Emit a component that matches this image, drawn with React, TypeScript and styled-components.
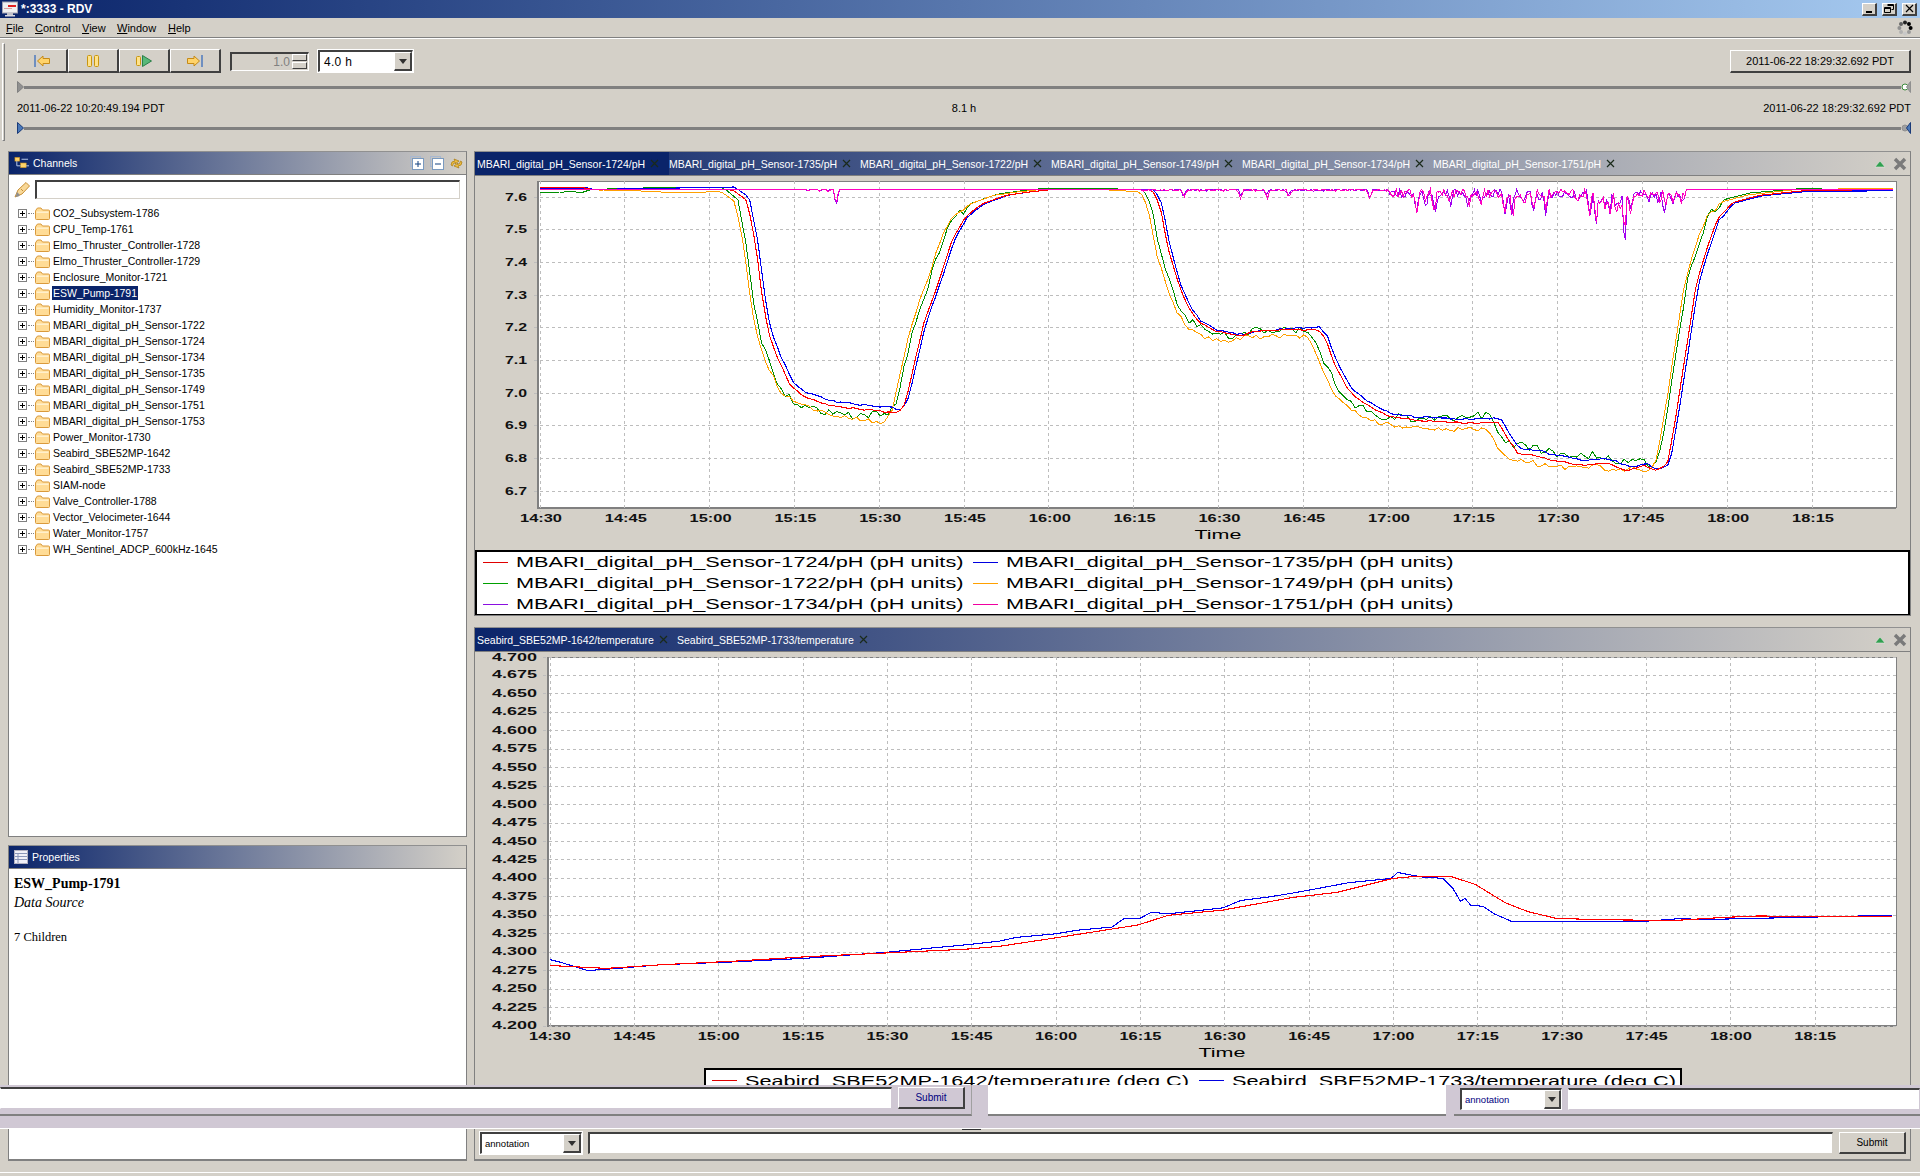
import React from 'react';
import styled, { createGlobalStyle, css } from 'styled-components';

const BEIGE = '#d4d0c8';
const LILAC = '#d0c8d4';
const NAVY = '#0a246a';

type Pt = [number, number];

// chart data, minutes after 14:30 against the value
const phBase: Pt[] = [
    [0, 7.63], [8, 7.628], [9, 7.623], [34, 7.622], [36.6, 7.59], [38.2, 7.45], [39.4, 7.28], [40.5, 7.18], [42, 7.11],
    [44.4, 7.02], [46.8, 6.99], [50.8, 6.965], [54.7, 6.955], [60, 6.945], [63.4, 6.94], [64.6, 6.97], [66.6, 7.12],
    [68, 7.22], [70.5, 7.34], [72.9, 7.47], [75.3, 7.54], [78.4, 7.58], [82.4, 7.605], [86.4, 7.615], [90, 7.622],
    [108.3, 7.622], [109.7, 7.573], [111, 7.45], [113, 7.33], [114.8, 7.26], [116.6, 7.217], [119.4, 7.19], [124, 7.177],
    [126.8, 7.19], [131.5, 7.194], [137.5, 7.195], [138.9, 7.167], [140.7, 7.085], [143, 7.01], [145.3, 6.974], [150, 6.93],
    [154.6, 6.918], [160, 6.912], [165, 6.908], [169.4, 6.912], [171.2, 6.862], [173, 6.816], [175.9, 6.81], [178.7, 6.796],
    [184.2, 6.78], [188.8, 6.786], [192.5, 6.762], [195, 6.78], [197.6, 6.765], [199.4, 6.78], [200.8, 6.913], [202.7, 7.126],
    [204.5, 7.33], [206.4, 7.44], [208.2, 7.53], [211, 7.583], [215.7, 7.605], [224, 7.62], [239.7, 7.623],
];

const phVariants = [
    {
        color: '#008f00', width: 1, shift: -1.6, noise: 0.012, seed: 3,
        offsets: [[0, -0.015], [7, -0.012], [9, 0], [20, 0.006], [33, 0.006], [45, -0.02], [55, -0.022], [62, 0.004], [120, 0.002], [145, -0.005], [160, 0.016], [175, 0.03], [190, 0.024], [198, 0.012], [240, 0]] as Pt[],
    },
    {
        color: '#ffa000', width: 1, shift: -2.1, noise: 0.007, seed: 7,
        offsets: [[0, 0], [15, -0.002], [25, -0.01], [33, -0.004], [45, -0.012], [60, -0.03], [64, 0], [100, 0], [120, -0.02], [150, -0.02], [165, -0.02], [185, -0.008], [200, 0], [240, 0.004]] as Pt[],
    },
    {
        color: '#0000f0', width: 1.1, shift: 0.4, noise: 0.003, seed: 11,
        offsets: [[0, -0.004], [9, 0], [45, 0.012], [62, 0.014], [66, 0], [130, 0.002], [145, 0.008], [170, 0.012], [180, 0.018], [192, 0.012], [199, 0], [240, -0.004]] as Pt[],
    },
    {
        color: '#ff0000', width: 1.1, shift: 0, noise: 0.002, seed: 17,
        offsets: [[0, 0], [240, 0]] as Pt[],
    },
];

const phDips: Pt[] = [
    [47.5, 0.006], [49.5, 0.006], [51, 0.008], [52.4, 0.055], [113.9, 0.02], [124, 0.02], [128.6, 0.025], [132.5, 0.02],
    [146.7, 0.03], [155, 0.05], [156.6, 0.03], [158.3, 0.065], [161, 0.03], [164.3, 0.045], [166.5, 0.03], [170.7, 0.08],
    [172, 0.075], [174, 0.03], [175.7, 0.05], [177, 0.02], [178, 0.05], [183.5, 0.03], [185.6, 0.07], [186.8, 0.11],
    [187.7, 0.05], [188.4, 0.06], [189.3, 0.08], [190.3, 0.06], [191, 0.04], [192, 0.15], [193, 0.07], [196, 0.03],
    [198, 0.03], [199, 0.06], [200.4, 0.04], [202, 0.02],
];

const tempRed: Pt[] = [
    [0, 4.282], [10, 4.278], [20, 4.283], [33, 4.288], [46, 4.294], [60, 4.299], [74, 4.304], [80, 4.308], [90.5, 4.32],
    [104.7, 4.337], [110, 4.35], [119.7, 4.357], [132, 4.374], [140, 4.381], [150, 4.4], [153, 4.402], [160.5, 4.402],
    [164.6, 4.392], [170, 4.367], [174, 4.355], [179, 4.346], [186.6, 4.344], [200, 4.343], [208.5, 4.347], [214.8, 4.349],
    [238.8, 4.348],
];

const tempBlue: Pt[] = [
    [0, 4.29], [2, 4.286], [6.7, 4.275], [12, 4.278], [19.8, 4.283], [33, 4.287], [46, 4.292], [60, 4.3], [74, 4.31],
    [80, 4.315], [83, 4.32], [90, 4.325], [94, 4.33], [100, 4.334], [102, 4.345], [105, 4.346], [107, 4.354], [110, 4.352],
    [119.7, 4.36], [122.9, 4.37], [128, 4.375], [132, 4.38], [135.7, 4.385], [142, 4.394], [149.7, 4.4], [150.8, 4.408],
    [155, 4.402], [158.9, 4.4], [160.7, 4.386], [162, 4.369], [162.8, 4.373], [163.8, 4.364], [166, 4.362], [168, 4.352],
    [171, 4.342], [179, 4.341], [195, 4.342], [201.7, 4.346], [204, 4.344], [215, 4.346], [238.8, 4.35],
];

const lerp = (pts: Pt[], t: number) => {
    if (t <= pts[0][0]) return pts[0][1];
    for (let i = 1; i < pts.length; i++) {
        if (t <= pts[i][0]) {
            const [t0, v0] = pts[i - 1];
            const [t1, v1] = pts[i];
            return v0 + ((v1 - v0) * (t - t0)) / (t1 - t0);
        }
    }
    return pts[pts.length - 1][1];
};

const rnd = (n: number) => {
    const s = Math.sin(n * 127.1 + 3.7) * 43758.5453;
    return s - Math.floor(s) - 0.5;
};

const toLine = (vals: Pt[], toX: (t: number) => number, toY: (v: number) => number) =>
    vals.map(([t, v]) => `${toX(t).toFixed(1)},${toY(v).toFixed(1)}`).join(' ');

const phX = (t: number) => 540 + t * 5.653;
const phY = (v: number) => 196 + (7.6 - v) * 327;
const tempX = (t: number) => 550 + t * 5.62;
const tempY = (v: number) => 1025 - (v - 4.2) * 738;

const phSeries = phVariants.map((s) => {
    const vals: Pt[] = [];
    for (let t = 0; t <= 239.7; t += 0.7) {
        const b = lerp(phBase, t - s.shift);
        const n = b < 7.58 ? rnd(t + s.seed) * s.noise * 2 : 0;
        vals.push([t, b + lerp(s.offsets, t) + n]);
    }
    return { color: s.color, width: s.width, points: toLine(vals, phX, phY) };
});

const dipSeries = (seed: number, skew: number) => {
    const vals: Pt[] = [];
    for (let t = 0; t <= 239.7; t += 0.3) {
        let v = 7.624;
        phDips.forEach(([at, depth]) => {
            const d = Math.abs(t - at - skew * rnd(at + seed));
            if (d < 0.5) v -= depth * (1 - d / 0.5) * (1 + rnd(at * 3 + seed) * 0.5);
        });
        if (t > 106 && t < 203) v -= Math.abs(rnd(t + seed)) * (t > 150 ? 0.05 : 0.012);
        vals.push([t, v]);
    }
    return toLine(vals, phX, phY);
};

const range = (n: number) => Array.from({ length: n }, (_, i) => i);
const hourLabel = (i: number) => {
    const m = 14 * 60 + 30 + i * 15;
    return `${Math.floor(m / 60)}:${String(m % 60).padStart(2, '0')}`;
};

const channels = [
    'CO2_Subsystem-1786', 'CPU_Temp-1761', 'Elmo_Thruster_Controller-1728', 'Elmo_Thruster_Controller-1729',
    'Enclosure_Monitor-1721', 'ESW_Pump-1791', 'Humidity_Monitor-1737', 'MBARI_digital_pH_Sensor-1722',
    'MBARI_digital_pH_Sensor-1724', 'MBARI_digital_pH_Sensor-1734', 'MBARI_digital_pH_Sensor-1735',
    'MBARI_digital_pH_Sensor-1749', 'MBARI_digital_pH_Sensor-1751', 'MBARI_digital_pH_Sensor-1753', 'Power_Monitor-1730',
    'Seabird_SBE52MP-1642', 'Seabird_SBE52MP-1733', 'SIAM-node', 'Valve_Controller-1788', 'Vector_Velocimeter-1644',
    'Water_Monitor-1757', 'WH_Sentinel_ADCP_600kHz-1645',
];

const phLegend = [
    ['#e00000', '1724'], ['#0000e0', '1735'], ['#00a000', '1722'], ['#ffa000', '1749'], ['#8a10e0', '1734'], ['#f000a0', '1751'],
];

const GlobalStyle = createGlobalStyle`
    html, body {
        margin: 0;
        padding: 0;
        width: 1920px;
        height: 1176px;
        overflow: hidden;
        background: ${BEIGE};
        font-family: "Liberation Sans", Arial, sans-serif;
        font-size: 11px;
        color: #000;
    }
`;

const raised = css`
    border-style: solid;
    border-width: 1px 2px 2px 1px;
    border-color: #fff #404040 #404040 #fff;
    background: ${BEIGE};
    box-sizing: border-box;
`;

const sunken = css`
    border-style: solid;
    border-width: 2px 1px 1px 2px;
    border-color: #404040 #fff #fff #404040;
    box-sizing: border-box;
`;

const Page = styled.div`
    width: 1920px;
    height: 1176px;
    display: flex;
    flex-direction: column;
    overflow: hidden;
`;

const TitleBar = styled.div`
    height: 18px;
    flex: none;
    display: flex;
    align-items: center;
    padding: 0 3px 0 2px;
    gap: 3px;
    background: linear-gradient(90deg, ${NAVY} 0%, #a6caf0 100%);
    color: #fff;
    font-weight: bold;
    font-size: 12px;
`;

const TitleText = styled.span`
    flex: 1;
`;

const WinButton = styled.div`
    ${raised}
    width: 15px;
    height: 13px;
    display: flex;
    align-items: center;
    justify-content: center;
    margin-left: 2px;
`;

const MenuBar = styled.div`
    height: 20px;
    flex: none;
    display: flex;
    align-items: center;
    padding: 0 6px;
    box-sizing: border-box;
    border-bottom: 1px solid #808080;
    box-shadow: 0 1px 0 #fff;
`;

const MenuItem = styled.span<{ $w: number }>`
    width: ${(p) => p.$w}px;
`;

const MenuSpinner = styled.svg`
    margin-left: auto;
    margin-right: 1px;
    margin-top: 1px;
`;

const Toolbar = styled.div`
    height: 113px;
    flex: none;
    display: flex;
    box-sizing: border-box;
    padding: 5px 9px 0 2px;
`;

const Grip = styled.div`
    width: 1px;
    height: 96px;
    border: 1px solid;
    border-color: #fff #808080 #808080 #fff;
    margin-right: 12px;
`;

const ToolStack = styled.div`
    flex: 1;
    display: flex;
    flex-direction: column;
`;

const ToolRow = styled.div`
    display: flex;
    align-items: center;
    height: 24px;
    margin-top: 6px;
`;

const NavButton = styled.div`
    ${raised}
    width: 51px;
    height: 24px;
    display: flex;
    align-items: center;
    justify-content: center;
`;

const Spinner = styled.div`
    ${sunken}
    width: 79px;
    height: 19px;
    margin-left: 9px;
    display: flex;
    align-items: center;
    justify-content: flex-end;
    color: #808080;
    font-size: 12px;
    gap: 2px;
    padding-right: 1px;
`;

const SpinArrows = styled.div`
    width: 15px;
    height: 15px;
    display: flex;
    flex-direction: column;
    gap: 1px;
`;

const SpinArrow = styled.div`
    ${raised}
    flex: 1;
    border-width: 1px;
`;

const SpeedCombo = styled.div`
    ${sunken}
    width: 95px;
    height: 22px;
    margin-left: 9px;
    background: #fff;
    display: flex;
    align-items: center;
    padding-left: 4px;
    font-size: 12px;
    letter-spacing: 0.3px;
    box-shadow: 0 0 0 1px #fff;
`;

const ComboText = styled.span`
    flex: 1;
    white-space: nowrap;
`;

const ComboArrow = styled.div<{ $w: number }>`
    ${raised}
    width: ${(p) => p.$w}px;
    align-self: stretch;
    display: flex;
    align-items: center;
    justify-content: center;
    &::after {
        content: '';
        border-style: solid;
        border-width: 5px 4px 0;
        border-color: #303030 transparent transparent;
    }
`;

const TimeButton = styled.div`
    ${raised}
    width: 181px;
    height: 23px;
    margin-left: auto;
    display: flex;
    align-items: center;
    justify-content: center;
`;

const SliderRow = styled.div<{ $top: number }>`
    display: flex;
    align-items: center;
    height: 14px;
    margin-top: ${(p) => p.$top}px;
`;

const SliderBar = styled.div`
    flex: 1;
    height: 3px;
    background: #808080;
`;

const LabelRow = styled.div`
    display: flex;
    justify-content: space-between;
    align-items: center;
    height: 14px;
    margin-top: 7px;
`;

const Main = styled.div`
    height: 934px;
    flex: none;
    display: grid;
    grid-template-columns: 459px 1437px;
    column-gap: 7px;
    padding-left: 8px;
    overflow: hidden;
`;

const Column = styled.div`
    display: flex;
    flex-direction: column;
    min-width: 0;
`;

const Panel = styled.div<{ $h: number; $gap?: number }>`
    height: ${(p) => p.$h}px;
    flex: none;
    box-sizing: border-box;
    border: 1px solid #808080;
    border-top-color: #909090;
    margin-bottom: ${(p) => p.$gap ?? 0}px;
    display: flex;
    flex-direction: column;
`;

const PanelHead = styled.div`
    height: 22px;
    flex: none;
    display: flex;
    align-items: center;
    padding: 0 2px 0 5px;
    gap: 4px;
    color: #fff;
    font-size: 10.5px;
    background: linear-gradient(90deg, ${NAVY} 0%, #6f7b9b 50%, ${BEIGE} 100%);
    border-bottom: 1px solid #808080;
`;

const HeadTitle = styled.span`
    flex: 1;
`;

const HeadTool = styled.svg<{ $gap?: number }>`
    flex: none;
    margin-left: ${(p) => p.$gap ?? 0}px;
`;

const PanelBody = styled.div`
    flex: 1;
    background: #fff;
    min-height: 0;
`;

const FilterRow = styled.div`
    height: 24px;
    display: flex;
    align-items: center;
    padding: 2px 6px 0 5px;
    gap: 4px;
`;

const FilterInput = styled.div`
    ${sunken}
    flex: 1;
    height: 19px;
    border-color: #404040 ${BEIGE} ${BEIGE} #404040;
`;

const Tree = styled.div`
    padding-top: 4px;
    font-size: 10.5px;
`;

const TreeRow = styled.div`
    height: 16px;
    display: flex;
    align-items: center;
    padding-left: 9px;
`;

const Expander = styled.div`
    width: 9px;
    height: 9px;
    box-sizing: border-box;
    border: 1px solid #808080;
    display: flex;
    align-items: center;
    justify-content: center;
    position: relative;
    &::before {
        content: '';
        width: 5px;
        height: 1px;
        background: #000;
    }
    &::after {
        content: '';
        width: 1px;
        height: 5px;
        background: #000;
        position: absolute;
        left: 3px;
        top: 1px;
    }
`;

const TreeDots = styled.div`
    width: 6px;
    margin: 0 1px;
    border-top: 1px dotted #808080;
`;

const TreeLabel = styled.span<{ $on: boolean }>`
    margin-left: 2px;
    padding: 1px 1px 1px 1px;
    white-space: nowrap;
    ${(p) => p.$on && css`
        background: ${NAVY};
        color: #fff;
    `}
`;

const Props = styled.div`
    padding: 6px 5px;
    font-family: "Liberation Serif", "Times New Roman", serif;
`;

const PropName = styled.div`
    font-weight: bold;
    font-size: 14px;
    line-height: 17px;
`;

const PropKind = styled.div`
    font-style: italic;
    font-size: 14px;
    line-height: 21px;
`;

const PropCount = styled.div`
    font-size: 12.5px;
    margin-top: 17px;
`;

const TabHead = styled(PanelHead)`
    padding: 0 3px 0 2px;
    gap: 0;
    height: 23px;
`;

const Tab = styled.div<{ $w: number; $on?: boolean }>`
    width: ${(p) => p.$w}px;
    flex: none;
    display: flex;
    align-items: center;
    gap: 5px;
    white-space: nowrap;
    align-self: stretch;
    ${(p) => p.$on && css`
        background: ${NAVY};
        margin-left: -2px;
        padding-left: 2px;
    `}
`;

const TabSpacer = styled.div`
    flex: 1;
`;

const ChartPane = styled.div`
    flex: 1;
    min-height: 0;
    display: flex;
    flex-direction: column;
    overflow: hidden;
`;

const ChartSvg = styled.svg`
    display: block;
    flex: none;
`;

const AxisText = styled.text`
    font-family: "Liberation Sans", Arial, sans-serif;
    font-size: 11px;
    font-weight: bold;
    fill: #111;
`;

const AxisTitle = styled.text`
    font-family: "Liberation Sans", Arial, sans-serif;
    font-size: 13px;
    fill: #000;
`;

const Legend = styled.div`
    height: 66px;
    flex: none;
    box-sizing: border-box;
    border: 2px solid #000;
    background: #fff;
    display: grid;
    grid-template-columns: 490px 1fr;
    grid-auto-rows: 21px;
    align-content: center;
    padding-left: 6px;
`;

const LegendBottom = styled.div`
    width: 978px;
    height: 40px;
    flex: none;
    box-sizing: border-box;
    margin: 1px 0 0 229px;
    border: 2px solid #000;
    background: #fff;
    display: flex;
    align-items: flex-start;
    padding: 0 0 0 6px;
`;

const LegendItem = styled.div<{ $w?: number }>`
    display: flex;
    align-items: center;
    height: 21px;
    ${(p) => p.$w && `width: ${p.$w}px;`}
`;

const LegendSwatch = styled.div<{ $c: string }>`
    width: 25px;
    height: 1px;
    background: ${(p) => p.$c};
    flex: none;
    margin-right: 8px;
`;

const LegendText = styled.span`
    font-size: 14px;
    white-space: nowrap;
    transform: scaleX(1.55);
    transform-origin: left center;
`;

const GhostStrip = styled.div`
    height: 43px;
    flex: none;
    background: ${LILAC};
    border-bottom: 1px solid #fff;
    box-sizing: content-box;
`;

const GhostRow = styled.div`
    height: 31px;
    display: flex;
`;

const GhostLeft = styled.div`
    width: 972px;
    flex: none;
    box-sizing: border-box;
    border-right: 1px solid #a0a0a0;
    border-bottom: 2px solid #808080;
    display: flex;
    align-items: flex-start;
    padding: 2px 6px 0 0;
    gap: 6px;
`;

const PlainInput = styled.div`
    ${sunken}
    flex: 1;
    height: 22px;
    background: #fff;
    border-left-width: 1px;
    border-color: #404040 ${LILAC} ${LILAC} #fff;
`;

const GhostButton = styled.div`
    ${raised}
    width: 67px;
    height: 22px;
    background: ${LILAC};
    color: #000080;
    display: flex;
    align-items: center;
    justify-content: center;
    font-size: 10px;
`;

const GhostPaper = styled.div`
    width: 458px;
    flex: none;
    margin-left: 16px;
    background: #fff;
    border-bottom: 2px solid #808080;
`;

const GhostRight = styled.div`
    flex: 1;
    margin-left: 8px;
    border-bottom: 2px solid #808080;
    display: flex;
    align-items: flex-start;
    padding: 3px 0 0 6px;
    gap: 6px;
`;

const MiniCombo = styled.div<{ $ghost?: boolean }>`
    ${sunken}
    width: 102px;
    height: 22px;
    flex: none;
    background: #fff;
    display: flex;
    align-items: center;
    padding-left: 3px;
    font-size: 9.5px;
    color: ${(p) => (p.$ghost ? '#000080' : '#000')};
    box-shadow: 0 0 0 1px ${(p) => (p.$ghost ? LILAC : '#fff')};
`;

const BottomBar = styled.div`
    height: 32px;
    flex: none;
    display: grid;
    grid-template-columns: 459px 1437px;
    column-gap: 7px;
    padding-left: 8px;
    position: relative;
`;

const SashMark = styled.div`
    position: absolute;
    left: 962px;
    top: 0;
    width: 19px;
    height: 1px;
    background: #333;
`;

const BottomPaper = styled.div`
    background: #fff;
    border: 1px solid #808080;
    border-top: none;
    border-bottom-width: 2px;
`;

const BottomTools = styled.div`
    border: 1px solid #808080;
    border-top: none;
    border-bottom-width: 2px;
    display: flex;
    align-items: flex-start;
    padding: 3px 4px 0 5px;
    gap: 6px;
`;

const BottomInput = styled.div`
    ${sunken}
    flex: 1;
    height: 22px;
    background: #fff;
    border-color: #404040 ${BEIGE} ${BEIGE} #404040;
`;

const BottomSubmit = styled.div`
    ${raised}
    width: 67px;
    height: 22px;
    flex: none;
    display: flex;
    align-items: center;
    justify-content: center;
    font-size: 10px;
`;

const FootRule = styled.div`
    height: 1px;
    margin-top: 11px;
    background: #fff;
`;

const CloseX = ({ color = '#1a2a1a' }: { color?: string }) => (
    <svg width="9" height="9" viewBox="0 0 9 9">
        <path d="M1 1 8 8M8 1 1 8" stroke={color} strokeWidth="1.2" fill="none" />
    </svg>
);

const Folder = () => (
    <svg width="15" height="13" viewBox="0 0 15 13" style={{ flex: 'none' }}>
        <path d="M1 3 2.5 1H6L7.5 3H13.5Q14.5 3 14.5 4V11.5Q14.5 12.5 13.5 12.5H1.5Q.5 12.5 .5 11.5V4Z" fill="#ffdc96" stroke="#d99a3c" />
        <path d="M1.5 4.5H13.5V6H1.5Z" fill="#fff0cc" />
    </svg>
);

const TitleIcon = () => (
    <svg width="16" height="16" viewBox="0 0 16 16" style={{ flex: 'none' }}>
        <rect x="0.5" y="1" width="15" height="11" fill="#f0f0f0" stroke="#a0a0b0" />
        <path d="M6 4H14V6H6Z" fill="#e02020" />
        <path d="M2 7H10V8H2Z" fill="#d8a0a0" />
        <rect x="5" y="12" width="6" height="2" fill="#c0c0c8" />
        <rect x="3" y="14" width="10" height="1.5" fill="#d8d8e0" />
    </svg>
);

const NavIcon = ({ kind }: { kind: 'back' | 'pause' | 'play' | 'forward' }) => (
    <svg width="18" height="14" viewBox="0 0 18 14">
        {kind === 'back' && (
            <>
                <rect x="1" y="1" width="2" height="12" fill="#6f8fc0" />
                <path d="M4.5 7 10 2V4.5H16.5V9.5H10V12Z" fill="#ffd36a" stroke="#c58a18" />
            </>
        )}
        {kind === 'pause' && (
            <>
                <rect x="3.5" y="1.5" width="4" height="11" rx="1" fill="#ffe28a" stroke="#c8960f" />
                <rect x="10.5" y="1.5" width="4" height="11" rx="1" fill="#ffe28a" stroke="#c8960f" />
            </>
        )}
        {kind === 'play' && (
            <>
                <rect x="1.5" y="2.5" width="4" height="9" rx="1" fill="#ffe28a" stroke="#c8960f" />
                <path d="M7.5 1.5 16.5 7 7.5 12.5Z" fill="#58b878" stroke="#2a8048" />
            </>
        )}
        {kind === 'forward' && (
            <>
                <rect x="15" y="1" width="2" height="12" fill="#6f8fc0" />
                <path d="M13.5 7 8 2V4.5H1.5V9.5H8V12Z" fill="#ffd36a" stroke="#c58a18" />
            </>
        )}
    </svg>
);

const StartThumb = ({ fill, stroke }: { fill: string; stroke: string }) => (
    <svg width="7" height="12" viewBox="0 0 7 12" style={{ flex: 'none' }}>
        <path d="M.5 .5 6.5 6 .5 11.5Z" fill={fill} stroke={stroke} />
    </svg>
);

const EndThumb = ({ dot, dotEdge, cap, capEdge }: { dot: string; dotEdge: string; cap: string; capEdge: string }) => (
    <svg width="10" height="12" viewBox="0 0 10 12" style={{ flex: 'none' }}>
        <circle cx="4" cy="6" r="3" fill={dot} stroke={dotEdge} />
        <path d="M9.5 .5 5.5 6 9.5 11.5Z" fill={cap} stroke={capEdge} />
    </svg>
);

const ChartFrame = ({ x0, x1, y0, y1 }: { x0: number; x1: number; y0: number; y1: number }) => (
    <>
        <rect x={x0} y={y0} width={x1 - x0} height={y1 - y0} fill="#fff" shapeRendering="crispEdges" />
        <path d={`M${x0} ${y0}H${x1}V${y1}`} fill="none" stroke="#808080" shapeRendering="crispEdges" />
        <path d={`M${x0} ${y0}V${y1}H${x1}`} fill="none" stroke="#808080" strokeWidth="2" shapeRendering="crispEdges" />
    </>
);

const PhChart = () => {
    const yTicks = range(10).map((i) => ({ y: phY(7.6 - i * 0.1), label: (7.6 - i * 0.1).toFixed(1) }));
    const xTicks = range(16).map((i) => ({ x: 540 + i * 84.8, label: hourLabel(i) }));
    return (
        <ChartSvg width="1435" height="374" viewBox="475 175 1435 374">
            <ChartFrame x0={538} x1={1896} y0={180} y1={507} />
            {yTicks.map((t) => (
                <g key={t.label}>
                    <line x1="534" x2={1896} y1={t.y} y2={t.y} stroke="#bdbdbd" strokeDasharray="3 3" shapeRendering="crispEdges" />
                    <AxisText x="527" y={t.y + 3.5} textAnchor="end" textLength={22} lengthAdjust="spacingAndGlyphs">
                        {t.label}
                    </AxisText>
                </g>
            ))}
            {xTicks.map((t) => (
                <g key={t.label}>
                    <line x1={t.x} x2={t.x} y1={180} y2={511} stroke="#bdbdbd" strokeDasharray="3 3" shapeRendering="crispEdges" />
                    <AxisText x={t.x + 1} y={521} textAnchor="middle" textLength={42} lengthAdjust="spacingAndGlyphs">
                        {t.label}
                    </AxisText>
                </g>
            ))}
            {phSeries.map((s) => (
                <polyline key={s.color} points={s.points} fill="none" stroke={s.color} strokeWidth={s.width} shapeRendering="crispEdges" />
            ))}
            <polyline points={dipSeries(31, 0.3)} fill="none" stroke="#a000f0" strokeWidth="1" shapeRendering="crispEdges" />
            <polyline points={dipSeries(5, -0.3)} fill="none" stroke="#ff00c0" strokeWidth="1" shapeRendering="crispEdges" />
            <AxisTitle x="1218" y="538" textAnchor="middle" textLength={47} lengthAdjust="spacingAndGlyphs">
                Time
            </AxisTitle>
        </ChartSvg>
    );
};

const TempChart = () => {
    const yTicks = range(21).map((i) => ({ y: 1025 - i * 18.45, label: (4.2 + i * 0.025).toFixed(3) }));
    const xTicks = range(16).map((i) => ({ x: 550 + i * 84.35, label: hourLabel(i) }));
    return (
        <ChartSvg width="1435" height="415" viewBox="475 651 1435 415">
            <ChartFrame x0={548} x1={1896} y0={656} y1={1025} />
            {yTicks.map((t) => (
                <g key={t.label}>
                    <line x1="543" x2={1896} y1={t.y} y2={t.y} stroke="#bdbdbd" strokeDasharray="3 3" shapeRendering="crispEdges" />
                    <AxisText x="537" y={Math.max(t.y + 3, 660)} textAnchor="end" textLength={45} lengthAdjust="spacingAndGlyphs">
                        {t.label}
                    </AxisText>
                </g>
            ))}
            {xTicks.map((t) => (
                <g key={t.label}>
                    <line x1={t.x} x2={t.x} y1={656} y2={1029} stroke="#bdbdbd" strokeDasharray="3 3" shapeRendering="crispEdges" />
                    <AxisText x={t.x} y={1039} textAnchor="middle" textLength={42} lengthAdjust="spacingAndGlyphs">
                        {t.label}
                    </AxisText>
                </g>
            ))}
            <polyline points={toLine(tempBlue, tempX, tempY)} fill="none" stroke="#0000f0" strokeWidth="1.1" shapeRendering="crispEdges" />
            <polyline points={toLine(tempRed, tempX, tempY)} fill="none" stroke="#ff0000" strokeWidth="1.1" shapeRendering="crispEdges" />
            <AxisTitle x="1222" y="1056" textAnchor="middle" textLength={47} lengthAdjust="spacingAndGlyphs">
                Time
            </AxisTitle>
        </ChartSvg>
    );
};

const PaneTools = () => (
    <>
        <HeadTool width="12" height="8" viewBox="0 0 12 8">
            <path d="M6 1 11 7H1Z" fill="#30a050" stroke="#e8e8e0" strokeWidth="0.6" />
        </HeadTool>
        <HeadTool $gap={7} width="14" height="14" viewBox="0 0 14 14">
            <path d="M2 2 12 12M12 2 2 12" stroke="#7a7a7a" strokeWidth="3.4" />
        </HeadTool>
    </>
);

export default function App() {
    return (
        <Page>
            <GlobalStyle />
            <TitleBar>
                <TitleIcon />
                <TitleText>*:3333 - RDV</TitleText>
                <WinButton>
                    <svg width="9" height="9" viewBox="0 0 9 9">
                        <rect x="1" y="7" width="6" height="2" fill="#000" />
                    </svg>
                </WinButton>
                <WinButton>
                    <svg width="10" height="9" viewBox="0 0 10 9">
                        <path d="M3.5 .5H9.5V5.5H7.5M.5 3.5H6.5V8.5H.5Z M3.5 1.5H9.5 M.5 4.5H6.5" fill="none" stroke="#000" />
                    </svg>
                </WinButton>
                <WinButton>
                    <CloseX color="#000" />
                </WinButton>
            </TitleBar>
            <MenuBar>
                <MenuItem $w={29}><u>F</u>ile</MenuItem>
                <MenuItem $w={47}><u>C</u>ontrol</MenuItem>
                <MenuItem $w={35}><u>V</u>iew</MenuItem>
                <MenuItem $w={51}><u>W</u>indow</MenuItem>
                <MenuItem $w={30}><u>H</u>elp</MenuItem>
                <MenuSpinner width="16" height="16" viewBox="0 0 16 16">
                    {range(8).map((i) => (
                        <circle
                            key={i}
                            cx={8 + 5.6 * Math.cos((i * Math.PI) / 4 - Math.PI / 2)}
                            cy={8 + 5.6 * Math.sin((i * Math.PI) / 4 - Math.PI / 2)}
                            r="2"
                            fill={['#222', '#000', '#000', '#999', '#c8c8c8', '#b0b0b0', '#909090', '#606060'][i]}
                        />
                    ))}
                </MenuSpinner>
            </MenuBar>
            <Toolbar>
                <Grip />
                <ToolStack>
                    <ToolRow>
                        <NavButton><NavIcon kind="back" /></NavButton>
                        <NavButton><NavIcon kind="pause" /></NavButton>
                        <NavButton><NavIcon kind="play" /></NavButton>
                        <NavButton><NavIcon kind="forward" /></NavButton>
                        <Spinner>
                            1.0
                            <SpinArrows>
                                <SpinArrow />
                                <SpinArrow />
                            </SpinArrows>
                        </Spinner>
                        <SpeedCombo>
                            <ComboText>4.0 h</ComboText>
                            <ComboArrow $w={18} />
                        </SpeedCombo>
                        <TimeButton>2011-06-22 18:29:32.692 PDT</TimeButton>
                    </ToolRow>
                    <SliderRow $top={7}>
                        <StartThumb fill="#909090" stroke="#808080" />
                        <SliderBar />
                        <EndThumb dot="#fff" dotEdge="#3a8a3a" cap="#a0a0a0" capEdge="#909090" />
                    </SliderRow>
                    <LabelRow>
                        <span>2011-06-22 10:20:49.194 PDT</span>
                        <span>8.1 h</span>
                        <span>2011-06-22 18:29:32.692 PDT</span>
                    </LabelRow>
                    <SliderRow $top={6}>
                        <StartThumb fill="#4a78b8" stroke="#1a3a78" />
                        <SliderBar />
                        <EndThumb dot="#a0a0a0" dotEdge="#909090" cap="#4a78b8" capEdge="#1a3a78" />
                    </SliderRow>
                </ToolStack>
            </Toolbar>
            <Main>
                <Column>
                    <Panel $h={686} $gap={8}>
                        <PanelHead>
                            <svg width="15" height="14" viewBox="0 0 16 14">
                                <rect x="1" y="1" width="5" height="4" fill="#ffd36a" stroke="#c58a18" strokeWidth="0.6" />
                                <rect x="7" y="7" width="6" height="5" fill="#ffd36a" stroke="#c58a18" strokeWidth="0.6" />
                                <path d="M3 5V10H7M8 3H15M13 10H16" stroke="#c0d0f0" fill="none" />
                            </svg>
                            <HeadTitle>Channels</HeadTitle>
                            <HeadTool width="14" height="14" viewBox="0 0 14 14">
                                <rect x=".5" y=".5" width="10" height="10" fill="none" stroke="#a8b8d0" />
                                <rect x="2.5" y="2.5" width="11" height="11" fill="#fff" stroke="#7a9ac0" />
                                <path d="M5 8H11M8 5V11" stroke="#104080" />
                            </HeadTool>
                            <HeadTool $gap={2} width="14" height="14" viewBox="0 0 14 14">
                                <rect x=".5" y=".5" width="10" height="10" fill="none" stroke="#a8b8d0" />
                                <rect x="2.5" y="2.5" width="11" height="11" fill="#fff" stroke="#7a9ac0" />
                                <path d="M5 8H11" stroke="#104080" />
                            </HeadTool>
                            <HeadTool $gap={1} width="15" height="15" viewBox="0 0 15 15">
                                <path d="M2 9Q2 5 6 5L5 3 10 5 6 8 6.5 6.5Q4 6.5 3.5 10Z M13 6Q13 10 9 10L10 12 5 10 9 7 8.5 8.5Q11 8.5 11.5 5Z" fill="#f0c040" stroke="#a87810" strokeWidth="0.7" />
                            </HeadTool>
                        </PanelHead>
                        <PanelBody>
                            <FilterRow>
                                <svg width="17" height="17" viewBox="0 0 17 17" style={{ flex: 'none' }}>
                                    <path d="M1 16 4 9 12 1.5 15.5 5 8 13Z" fill="#f8d898" stroke="#c89038" />
                                    <path d="M3 11 6 14 4.5 15.5 1.5 15.8Z" fill="#909090" />
                                    <path d="M7 8 9 10" stroke="#c89038" />
                                </svg>
                                <FilterInput />
                            </FilterRow>
                            <Tree>
                                {channels.map((c) => (
                                    <TreeRow key={c}>
                                        <Expander />
                                        <TreeDots />
                                        <Folder />
                                        <TreeLabel $on={c === 'ESW_Pump-1791'}>{c}</TreeLabel>
                                    </TreeRow>
                                ))}
                            </Tree>
                        </PanelBody>
                    </Panel>
                    <Panel $h={300}>
                        <PanelHead>
                            <svg width="14" height="14" viewBox="0 0 14 14">
                                <rect x=".5" y=".5" width="13" height="13" fill="#f0f0f8" stroke="#b0b0c0" />
                                <path d="M1 3.5H13M1 6.5H13M1 9.5H13M4 3V13" stroke="#8a96b8" />
                            </svg>
                            <HeadTitle>Properties</HeadTitle>
                        </PanelHead>
                        <PanelBody>
                            <Props>
                                <PropName>ESW_Pump-1791</PropName>
                                <PropKind>Data Source</PropKind>
                                <PropCount>7 Children</PropCount>
                            </Props>
                        </PanelBody>
                    </Panel>
                </Column>
                <Column>
                    <Panel $h={465} $gap={11}>
                        <TabHead>
                            <Tab $w={192} $on>MBARI_digital_pH_Sensor-1724/pH <CloseX /></Tab>
                            <Tab $w={191}>MBARI_digital_pH_Sensor-1735/pH <CloseX /></Tab>
                            <Tab $w={191}>MBARI_digital_pH_Sensor-1722/pH <CloseX /></Tab>
                            <Tab $w={191}>MBARI_digital_pH_Sensor-1749/pH <CloseX /></Tab>
                            <Tab $w={191}>MBARI_digital_pH_Sensor-1734/pH <CloseX /></Tab>
                            <Tab $w={191}>MBARI_digital_pH_Sensor-1751/pH <CloseX /></Tab>
                            <TabSpacer />
                            <PaneTools />
                        </TabHead>
                        <ChartPane>
                            <PhChart />
                            <Legend>
                                {phLegend.map(([c, id]) => (
                                    <LegendItem key={id}>
                                        <LegendSwatch $c={c} />
                                        <LegendText>{`MBARI_digital_pH_Sensor-${id}/pH (pH units)`}</LegendText>
                                    </LegendItem>
                                ))}
                            </Legend>
                        </ChartPane>
                    </Panel>
                    <Panel $h={480}>
                        <TabHead>
                            <Tab $w={200}>Seabird_SBE52MP-1642/temperature <CloseX /></Tab>
                            <Tab $w={200}>Seabird_SBE52MP-1733/temperature <CloseX /></Tab>
                            <TabSpacer />
                            <PaneTools />
                        </TabHead>
                        <ChartPane>
                            <TempChart />
                            <LegendBottom>
                                <LegendItem $w={487}>
                                    <LegendSwatch $c="#e00000" />
                                    <LegendText>Seabird_SBE52MP-1642/temperature (deg C)</LegendText>
                                </LegendItem>
                                <LegendItem>
                                    <LegendSwatch $c="#0000e0" />
                                    <LegendText>Seabird_SBE52MP-1733/temperature (deg C)</LegendText>
                                </LegendItem>
                            </LegendBottom>
                        </ChartPane>
                    </Panel>
                </Column>
            </Main>
            <GhostStrip>
                <GhostRow>
                    <GhostLeft>
                        <PlainInput />
                        <GhostButton>Submit</GhostButton>
                    </GhostLeft>
                    <GhostPaper />
                    <GhostRight>
                        <MiniCombo $ghost>
                            <ComboText>annotation</ComboText>
                            <ComboArrow $w={17} />
                        </MiniCombo>
                        <PlainInput />
                    </GhostRight>
                </GhostRow>
            </GhostStrip>
            <BottomBar>
                <SashMark />
                <BottomPaper />
                <BottomTools>
                    <MiniCombo>
                        <ComboText>annotation</ComboText>
                        <ComboArrow $w={18} />
                    </MiniCombo>
                    <BottomInput />
                    <BottomSubmit>Submit</BottomSubmit>
                </BottomTools>
            </BottomBar>
            <FootRule />
        </Page>
    );
}
